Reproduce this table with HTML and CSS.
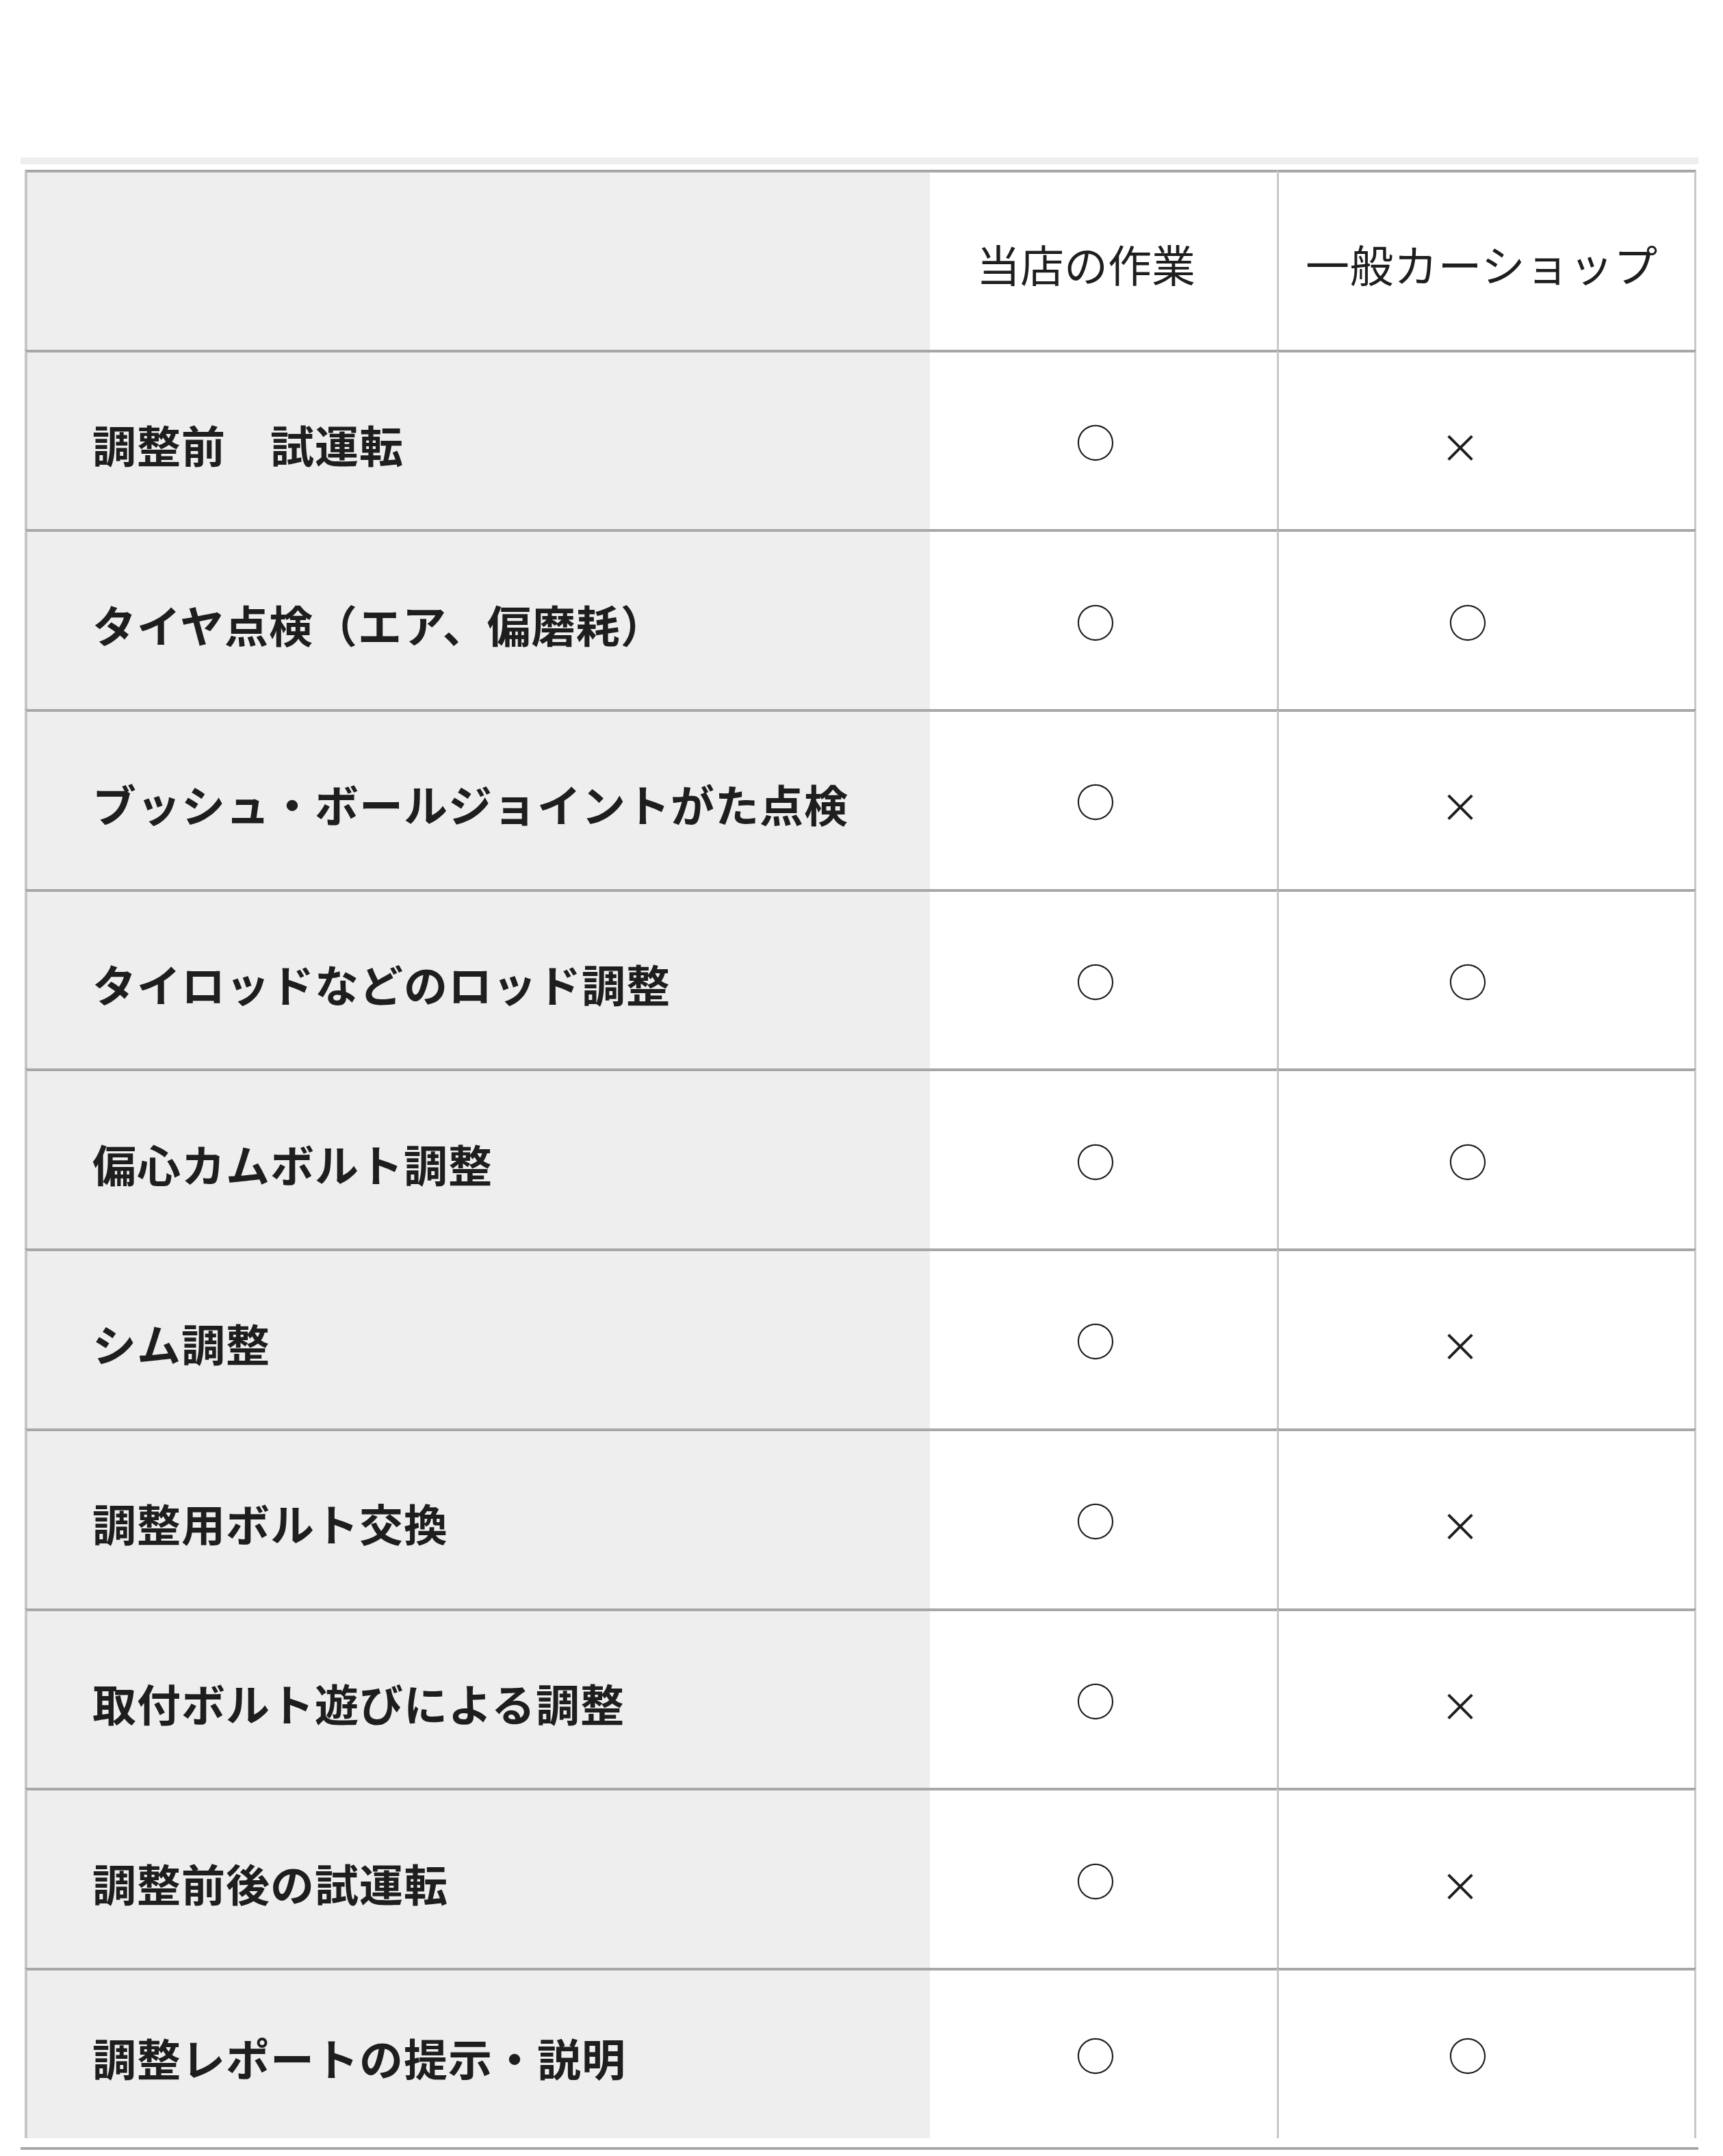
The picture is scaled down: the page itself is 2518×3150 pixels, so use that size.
FILE: index.html
```html
<!DOCTYPE html>
<html lang="ja">
<head>
<meta charset="utf-8">
<title>作業比較表</title>
<link rel="stylesheet" href="styles.css">
</head>
<body>
<div class="frame">
  <div class="grid" role="table">
    <div class="cell c1" role="columnheader"></div>
    <div class="cell c2 head" role="columnheader">当店の作業</div>
    <div class="cell c3 head" role="columnheader">一般カーショップ</div>

    <div class="cell c1 label" role="rowheader">調整前　試運転</div>
    <div class="cell c2 o" role="cell">○</div>
    <div class="cell c3 x" role="cell">×</div>

    <div class="cell c1 label" role="rowheader">タイヤ点検（エア、偏磨耗）</div>
    <div class="cell c2 o" role="cell">○</div>
    <div class="cell c3 o" role="cell">○</div>

    <div class="cell c1 label" role="rowheader">ブッシュ・ボールジョイントがた点検</div>
    <div class="cell c2 o" role="cell">○</div>
    <div class="cell c3 x" role="cell">×</div>

    <div class="cell c1 label" role="rowheader">タイロッドなどのロッド調整</div>
    <div class="cell c2 o" role="cell">○</div>
    <div class="cell c3 o" role="cell">○</div>

    <div class="cell c1 label" role="rowheader">偏心カムボルト調整</div>
    <div class="cell c2 o" role="cell">○</div>
    <div class="cell c3 o" role="cell">○</div>

    <div class="cell c1 label" role="rowheader">シム調整</div>
    <div class="cell c2 o" role="cell">○</div>
    <div class="cell c3 x" role="cell">×</div>

    <div class="cell c1 label" role="rowheader">調整用ボルト交換</div>
    <div class="cell c2 o" role="cell">○</div>
    <div class="cell c3 x" role="cell">×</div>

    <div class="cell c1 label" role="rowheader">取付ボルト遊びによる調整</div>
    <div class="cell c2 o" role="cell">○</div>
    <div class="cell c3 x" role="cell">×</div>

    <div class="cell c1 label" role="rowheader">調整前後の試運転</div>
    <div class="cell c2 o" role="cell">○</div>
    <div class="cell c3 x" role="cell">×</div>

    <div class="cell c1 label" role="rowheader">調整レポートの提示・説明</div>
    <div class="cell c2 o" role="cell">○</div>
    <div class="cell c3 o" role="cell">○</div>
  </div>
</div>
</body>
</html>
```

FILE: styles.css
```css
html, body {
  margin: 0;
  padding: 0;
  background: #ffffff;
}

body {
  font-family: "Noto Sans CJK JP", "Noto Sans", sans-serif;
  color: #1e1e1e;
}

.frame {
  margin: 230px 0 0 30px;
  width: 2452px;
  box-sizing: border-box;
  border-top: 10px solid #eeeeee;
  border-bottom: 4px solid #a9a9a9;
  padding: 8px 0 13px 6px;
}

.grid {
  display: grid;
  grid-template-columns: 1323px 507px 613px;
  grid-template-rows: repeat(10, 262.7px) 249px;
  width: 2443px;
}

.cell {
  box-sizing: border-box;
  border-top: 4px solid #a7a7a7;
  display: flex;
  align-items: center;
  font-size: 64px;
  line-height: 1;
  white-space: nowrap;
  overflow: hidden;
}

.c1 {
  background: #eeeeee;
  border-left: 4px solid #c6c6c6;
}

.c2 {
  background: #ffffff;
}

.c3 {
  background: #ffffff;
  border-left: 3px solid #c8c8c8;
  border-right: 3px solid #c8c8c8;
}

.label {
  font-weight: 700;
  letter-spacing: 1px;
  padding-left: 95px;
  padding-top: 8px;
}

.head {
  font-weight: 400;
  padding-top: 6px;
}

.c2.head {
  padding-left: 68px;
}

.c3.head {
  padding-left: 39px;
  letter-spacing: 0.5px;
}

.o, .x {
  font-size: 58px;
  font-weight: 400;
}

.c2.o {
  padding-left: 213px;
}

.c3.o {
  padding-left: 247px;
}

.c3.x {
  padding-left: 236px;
  padding-top: 14px;
}
```
